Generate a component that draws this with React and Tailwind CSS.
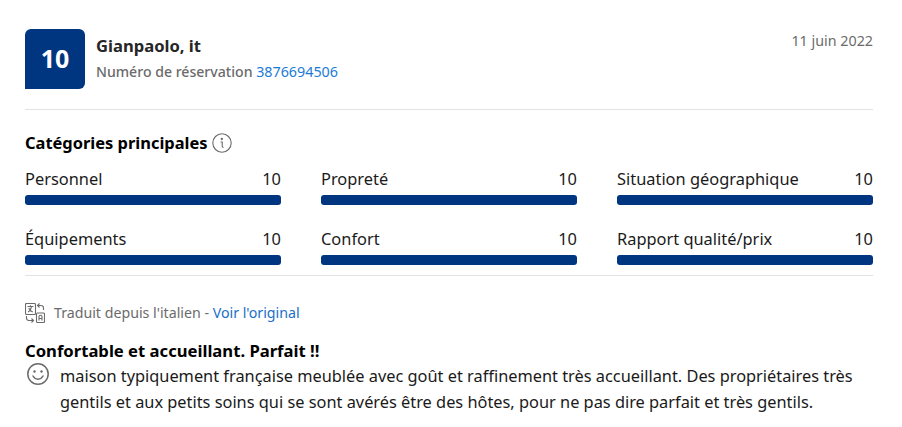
const cats = [
  ["Personnel", "10"],
  ["Propreté", "10"],
  ["Situation géographique", "10"],
  ["Équipements", "10"],
  ["Confort", "10"],
  ["Rapport qualité/prix", "10"],
];

export default function App() {
  return (
    <div className="w-[902px] h-[427px] bg-white overflow-hidden pl-[25px] pr-[29px] pt-[29px] font-['Noto_Sans',sans-serif] text-[#1a1a1a]">
      <div className="flex justify-between h-[81px] border-b border-[#e3e3e3]">
        <div className="flex gap-[11px]">
          <div className="w-[60px] h-[60px] bg-[#003580] rounded-t-[6px] rounded-br-[6px] flex items-center justify-center text-white font-bold text-[25px]">10</div>
          <div>
            <div className="text-[16.6px] font-bold leading-[22px] mt-[6px] text-[#262626]">Gianpaolo, it</div>
            <div className="text-[14.1px] leading-[20px] mt-[5px] font-medium text-[#6b6b6b]">
              Numéro de réservation <span className="text-[#1a7bd6] font-normal text-[14.3px]">3876694506</span>
            </div>
          </div>
        </div>
        <div className="text-[14.3px] leading-[20px] mt-[2px] text-[#6b6b6b]">11 juin 2022</div>
      </div>

      <div className="flex items-center gap-[5px] mt-[22px] h-[22px]">
        <span className="text-[16.45px] font-bold text-black leading-[22px]">Catégories principales</span>
        <svg className="-ml-px" width="20" height="20" viewBox="0 0 20 20" fill="none" stroke="#6b6b6b" strokeWidth="1.100">
          <circle cx="10" cy="10" r="9.200" />
          <path d="M9 9h1.200v4.200c0 .7.400 1 1 1" strokeLinecap="round" />
          <circle cx="9.800" cy="6" r="0.600" fill="#6b6b6b" />
        </svg>
      </div>

      <div className="grid grid-cols-3 gap-x-[40px] gap-y-[22px] mt-[13px] pb-[10px] border-b border-[#e3e3e3]">
        {cats.map(([label, value]) => (
          <div key={label}>
            <div className="flex justify-between text-[16.4px] leading-[24px] text-[#1a1a1a]">
              <span>{label}</span>
              <span>{value}</span>
            </div>
            <div className="h-[10px] mt-[4px] bg-[#003580] rounded-[3px]" />
          </div>
        ))}
      </div>

      <div className="flex items-center gap-[9px] mt-[27px] h-[20px] text-[14.2px]">
        <svg width="20" height="20" viewBox="0 0 20 20" fill="none" stroke="#6b6b6b" strokeWidth="1.100">
          <rect x="0.500" y="0.500" width="10" height="11" rx="1" />
          <path d="M2.500 3.500h6M5.500 2.200v1.300M3 9c2-1 3-2.800 3.500-5.500M3.800 5c.6 1.800 2 3.200 4 4" />
          <rect x="11.500" y="10" width="8" height="9.500" rx="1" />
          <path d="M14 17.500v-3.700a1.500 1.500 0 0 1 3 0v3.700M14 15.500h3" />
          <path d="M18.500 7V5c0-1.500-1-2.500-2.500-2.500h-3.500M14.500 .5l-2 2 2 2" />
          <path d="M1.500 13v2c0 1.500 1 2.500 2.500 2.500h4M6.500 15.500l2 2-2 2" />
        </svg>
        <span className="text-[#6b6b6b]">Traduit depuis l'italien - <span className="text-[#1a6fc9]">Voir l'original</span></span>
      </div>

      <div className="text-[16.65px] font-bold text-black leading-[23px] mt-[16px]">Confortable et accueillant. Parfait !!</div>
      <div className="flex gap-[10px] mt-px">
        <svg className="shrink-0 ml-[1px] -mt-px" width="24" height="24" viewBox="0 0 24 24" fill="none" stroke="#6b6b6b" strokeWidth="1.500">
          <circle cx="12" cy="12" r="10.200" />
          <path d="M7 14c1.200 2.200 3 3.200 5 3.200s3.800-1 5-3.200" strokeLinecap="round" />
          <circle cx="8.500" cy="9.500" r="1.200" fill="#6b6b6b" stroke="none" />
          <circle cx="15.500" cy="9.500" r="1.200" fill="#6b6b6b" stroke="none" />
        </svg>
        <p className="text-[16.35px] leading-[26px] text-[#1a1a1a] w-[800px]">
          maison typiquement française meublée avec goût et raffinement très accueillant. Des propriétaires très gentils et aux petits soins qui se sont avérés être des hôtes, pour ne pas dire parfait et très gentils.
        </p>
      </div>
    </div>
  );
}
